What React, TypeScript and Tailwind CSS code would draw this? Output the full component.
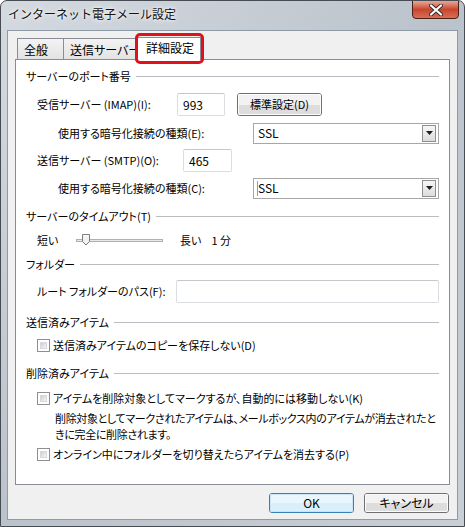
import { ReactNode } from 'react'

const font = "font-['Noto_Sans_CJK_JP',sans-serif] [font-feature-settings:'palt']"

function GroupHeader({ title, className }: { title: string; className?: string }) {
  return (
    <div className={`flex items-center h-[16px] pl-[10px] pr-[10px] ${className ?? ''}`}>
      <span className="leading-none whitespace-nowrap">{title}</span>
      <div className="flex-1 h-px bg-[#b9bcc0] ml-[5px]" />
    </div>
  )
}

function Checkbox() {
  return (
    <div className="w-[13px] h-[13px] border border-[#8e8f8f] bg-white p-[2px] shrink-0">
      <div className="w-full h-full bg-gradient-to-br from-[#cbcfd5] to-[#f6f6f6] border border-[#d6d8db]" />
    </div>
  )
}

function TextBox({ value, className }: { value?: string; className: string }) {
  return (
    <div
      className={`h-[23px] shrink-0 bg-white border border-[#dadde2] border-t-[#c5c8cc] rounded-[2px] flex items-center px-[5px] text-[12px] ${className}`}
    >
      {value}
    </div>
  )
}

function Select({ value, focused }: { value: string; focused?: boolean }) {
  return (
    <div className="w-[186px] h-[21px] shrink-0 bg-white border border-[#a7a7a7] flex items-center pl-[3px] pr-[2px]">
      {focused && <div className="w-px h-[15px] bg-[#6ea7e0] -mr-px" />}
      <span className="flex-1 leading-none pl-px text-[12px]">{value}</span>
      <div className="w-[14px] h-[17px] border border-[#8f8f8f] bg-gradient-to-b from-[#f6f6f6] to-[#dcdcdc] flex items-center justify-center">
        <svg width="7" height="4" viewBox="0 0 7 4">
          <path d="M0 0h7L3.5 4z" fill="#1e1e1e" />
        </svg>
      </div>
    </div>
  )
}

function Button({ children, className, primary }: { children: ReactNode; className: string; primary?: boolean }) {
  return (
    <div
      className={`relative shrink-0 rounded-[3px] border ${primary ? 'border-[#3c7fb1]' : 'border-[#707070]'} flex items-center justify-center overflow-hidden ${className}`}
    >
      <div className="absolute inset-0 flex flex-col">
        <div className={`flex-1 ${primary ? 'bg-[#eaf6fd]' : 'bg-[#f2f2f2]'}`} />
        <div className={`flex-1 ${primary ? 'bg-[#d9f0fc]' : 'bg-[#dddddd]'}`} />
      </div>
      <div
        className={`absolute inset-0 rounded-[2px] border ${primary ? 'border-[#c6e6f8]' : 'border-[#fcfcfc]'}`}
      />
      <span className="relative leading-none whitespace-nowrap">{children}</span>
    </div>
  )
}

function Slider() {
  return (
    <div className="relative w-[87px] h-[14px] flex items-center shrink-0">
      <div className="w-full h-[3px] border border-[#b0b0b0] bg-[#e7eaea]" />
      <svg className="absolute left-[5px] top-[1px]" width="10" height="12" viewBox="0 0 10 12">
        <path d="M1.5 0.5h7v7l-3.5 3.5l-3.5-3.5z" fill="#f1f1f1" stroke="#7c7c7c" />
        <path d="M2.5 1.5h5" stroke="#ffffff" />
      </svg>
    </div>
  )
}

export default function App() {
  return (
    <div
      className={`w-[465px] h-[527px] ${font} text-[11px] text-black flex flex-col rounded-t-[7px] border border-[#474c52] bg-gradient-to-br from-[#d4dae0] via-[#bac2cb] to-[#c9cfd6] overflow-hidden`}
    >
      {/* title bar */}
      <div className="h-[29px] flex items-start pl-[7px] pr-[5px]">
        <span className="mt-[7px] text-[12px] leading-none text-[#111] [font-feature-settings:normal] whitespace-nowrap [text-shadow:0_0_6px_#ffffff,0_0_3px_#ffffff]">
          インターネット電子メール設定
        </span>
        <div className="ml-auto w-[47px] h-[19px] -mt-px rounded-b-[4px] border border-[#4c2019] bg-gradient-to-b from-[#e8a797] via-[#c8452c] to-[#d86e55] flex items-center justify-center">
          <svg width="14" height="12" viewBox="0 0 14 12">
            <path d="M2 1.5l10 9M12 1.5l-10 9" stroke="#3b2a2a" strokeWidth="4" strokeLinecap="round" />
            <path d="M2 1.5l10 9M12 1.5l-10 9" stroke="#ffffff" strokeWidth="2.2" strokeLinecap="round" />
          </svg>
        </div>
      </div>

      {/* client */}
      <div className="mx-[6px] h-[490px] bg-[#f0f0f0] border border-[#8e9aa6] flex flex-col px-[7px] pt-[5px]">
        {/* tabs */}
        <div className="flex items-end h-[23px] pl-[2px] relative z-10 text-[12px]">
          <div className="w-[47px] h-[21px] border border-[#898c95] border-b-0 bg-gradient-to-b from-[#f3f3f3] to-[#e3e3e3] flex items-center pl-[6px] pt-px whitespace-nowrap">
            全般
          </div>
          <div className="w-[73px] h-[21px] border border-[#898c95] border-l-0 border-b-0 bg-gradient-to-b from-[#f3f3f3] to-[#e3e3e3] flex items-center pl-[6px] pt-px whitespace-nowrap">
            送信サーバー
          </div>
          <div className="relative w-[65px] h-[23px] -ml-px -mb-px border border-[#898c95] border-b-0 bg-white flex items-center pl-[9px] pb-[2px] whitespace-nowrap">
            詳細設定
            <div className="absolute left-[-2px] right-[-4px] top-[-5px] bottom-[-4px] border-[3px] border-[#e0101d] rounded-[5px]" />
          </div>
        </div>

        {/* panel */}
        <div className="h-[426px] bg-white border border-[#898c95] flex flex-col whitespace-nowrap">
          <GroupHeader title="サーバーのポート番号" className="mt-[8px]" />

          <div className="flex items-center h-[23px] mt-[9px] pl-[21px]">
            <span className="w-[140px] shrink-0">受信サーバー (IMAP)(I):</span>
            <TextBox value="993" className="w-[48px]" />
            <Button className="w-[85px] h-[23px] ml-[12px]">標準設定(D)</Button>
          </div>

          <div className="flex items-center h-[22px] mt-[6px] pl-[42px]">
            <span className="w-[195px] shrink-0">使用する暗号化接続の種類(E):</span>
            <Select value="SSL" />
          </div>

          <div className="flex items-center h-[23px] mt-[5px] pl-[21px]">
            <span className="w-[146px] shrink-0">送信サーバー (SMTP)(O):</span>
            <TextBox value="465" className="w-[49px]" />
          </div>

          <div className="flex items-center h-[22px] mt-[5px] pl-[42px]">
            <span className="w-[195px] shrink-0">使用する暗号化接続の種類(C):</span>
            <Select value="SSL" focused />
          </div>

          <GroupHeader title="サーバーのタイムアウト(T)" className="mt-[9px]" />

          <div className="flex items-center h-[18px] mt-[7px] pl-[21px]">
            <span className="w-[39px] shrink-0">短い</span>
            <Slider />
            <span className="ml-[17px]">長い</span>
            <span className="ml-[10px]">1 分</span>
          </div>

          <GroupHeader title="フォルダー" className="mt-[7px]" />

          <div className="flex items-center h-[22px] mt-[8px] pl-[21px]">
            <span className="w-[139px] shrink-0">ルート フォルダーのパス(F):</span>
            <TextBox className="w-[263px] h-[22px]" />
          </div>

          <GroupHeader title="送信済みアイテム" className="mt-[12px]" />

          <div className="flex items-center h-[16px] mt-[7px] pl-[21px]">
            <Checkbox />
            <span className="ml-[3px]">送信済みアイテムのコピーを保存しない(D)</span>
          </div>

          <GroupHeader title="削除済みアイテム" className="mt-[12px]" />

          <div className="flex items-center h-[16px] mt-[9px] pl-[21px]">
            <Checkbox />
            <span className="ml-[3px]">アイテムを削除対象としてマークするが、自動的には移動しない(K)</span>
          </div>

          <p className="mt-[4px] pl-[39px] leading-[16px] tracking-[-0.35px]">
            削除対象としてマークされたアイテムは、メールボックス内のアイテムが消去されたと
            <br />
            きに完全に削除されます。
          </p>

          <div className="flex items-center h-[16px] mt-[4px] pl-[21px]">
            <Checkbox />
            <span className="ml-[3px]">オンライン中にフォルダーを切り替えたらアイテムを消去する(P)</span>
          </div>
        </div>

        {/* buttons */}
        <div className="flex justify-end gap-[10px] mt-[8px] pr-[1px] text-[12px]">
          <Button primary className="w-[85px] h-[20px]">OK</Button>
          <Button className="w-[85px] h-[20px]">キャンセル</Button>
        </div>
      </div>
    </div>
  )
}
